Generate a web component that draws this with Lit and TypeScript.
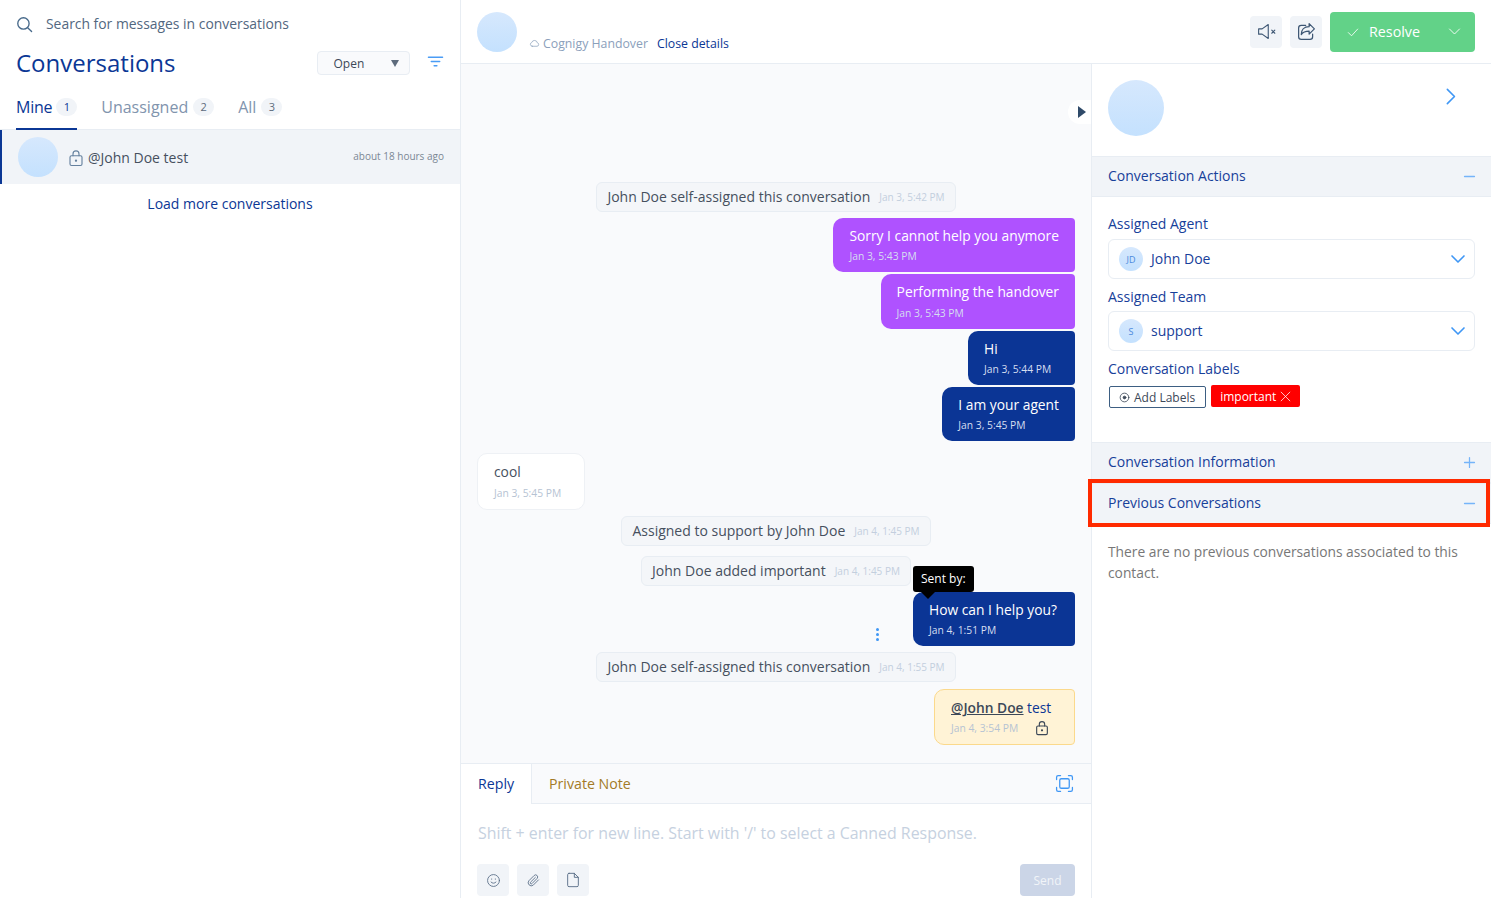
import { LitElement, html, css, svg } from 'lit';
import { customElement } from 'lit/decorators.js';

// small stroke icon helper, all icons on a 24 box
const icon = (body: unknown, size = 16, sw = 1.6) => html`<svg class="ico" width=${size} height=${size} viewBox="0 0 24 24" fill="none" stroke="currentColor" stroke-width=${sw} stroke-linecap="round" stroke-linejoin="round">${body}</svg>`;

const ICONS = {
  search: svg`<circle cx="10.5" cy="10.5" r="8"/><path d="M16.5 16.5 22 22"/>`,
  filter: svg`<path d="M2 6h20M6 12h12M10 18h4"/>`,
  lock: svg`<rect x="4" y="9" width="16" height="13" rx="2"/><path d="M8 9V6.5a4 4 0 0 1 8 0V9"/><circle cx="12" cy="15.5" r=".8" fill="currentColor"/>`,
  cloud: svg`<path d="M7 18h10.5a3.8 3.8 0 0 0 .7-7.500 6.300 6.300 0 0 0-12.200-.7A4.200 4.200 0 0 0 7 18Z"/>`,
  mute: svg`<path d="M3 9v6h4l7 5V4L7 9H3Z"/><path d="m18 10.5 3.5 3.5M21.5 10.5 18 14"/>`,
  share: svg`<path d="M11 5H6a3 3 0 0 0-3 3v10a3 3 0 0 0 3 3h10a3 3 0 0 0 3-3v-3"/><path d="m15 3 6 6-6 6v-3.5c-4 0-7 1-9 4 0-5 3-9 9-9V3Z"/>`,
  check: svg`<path d="m4 13 5.5 5.5L20 7"/>`,
  down: svg`<path d="m4 8 8 8 8-8"/>`,
  right: svg`<path d="m8 3 9 9-9 9"/>`,
  minus: svg`<path d="M5 12h14"/>`,
  plus: svg`<path d="M12 5v14M5 12h14"/>`,
  close: svg`<path d="m5 5 14 14M19 5 5 19"/>`,
  add: svg`<circle cx="12" cy="12" r="9.5"/><circle cx="12" cy="12" r="3" fill="currentColor"/>`,
  smile: svg`<circle cx="12" cy="12" r="9.5"/><path d="M8 14.5c2 2.5 6 2.5 8 0"/><path d="M9 9.500v.5M15 9.500v.5"/>`,
  clip: svg`<path d="m20 11-8.500 8.500a5 5 0 0 1-7-7L13 4a3.300 3.300 0 0 1 4.700 4.700L9.500 17a1.600 1.600 0 0 1-2.300-2.300L15 7"/>`,
  file: svg`<path d="M6 2h8l6 6v12a2 2 0 0 1-2 2H6a2 2 0 0 1-2-2V4a2 2 0 0 1 2-2Z"/><path d="M14 2v6h6"/>`,
  frame: svg`<rect x="6" y="6" width="12" height="12" rx="2"/><path d="M2 7V4a2 2 0 0 1 2-2h3M17 2h3a2 2 0 0 1 2 2v3M22 17v3a2 2 0 0 1-2 2h-3M7 22H4a2 2 0 0 1-2-2v-3"/>`,
};

type Item =
  | { kind: 'activity'; text: string; time: string; gap: number }
  | { kind: 'out'; text: string; time: string; gap: number; tone: 'bot' | 'agent'; tip?: boolean; tall?: boolean }
  | { kind: 'in'; text: string; time: string; gap: number }
  | { kind: 'note'; time: string; gap: number };

const THREAD: Item[] = [
  { kind: 'activity', text: 'John Doe self-assigned this conversation', time: 'Jan 3, 5:42 PM', gap: 0 },
  { kind: 'out', tone: 'bot', text: 'Sorry I cannot help you anymore', time: 'Jan 3, 5:43 PM', gap: 6 },
  { kind: 'out', tone: 'bot', text: 'Performing the handover', time: 'Jan 3, 5:43 PM', gap: 2, tall: true },
  { kind: 'out', tone: 'agent', text: 'Hi', time: 'Jan 3, 5:44 PM', gap: 2 },
  { kind: 'out', tone: 'agent', text: 'I am your agent', time: 'Jan 3, 5:45 PM', gap: 2 },
  { kind: 'in', text: 'cool', time: 'Jan 3, 5:45 PM', gap: 12 },
  { kind: 'activity', text: 'Assigned to support by John Doe', time: 'Jan 4, 1:45 PM', gap: 6 },
  { kind: 'activity', text: 'John Doe added important', time: 'Jan 4, 1:45 PM', gap: 10 },
  { kind: 'out', tone: 'agent', text: 'How can I help you?', time: 'Jan 4, 1:51 PM', gap: 6, tip: true },
  { kind: 'activity', text: 'John Doe self-assigned this conversation', time: 'Jan 4, 1:55 PM', gap: 6 },
  { kind: 'note', time: 'Jan 4, 3:54 PM', gap: 7 },
];

@customElement('app-root')
export class AppRoot extends LitElement {
  static styles = css`
    :host {
      display: flex;
      width: 100%;
      height: 100vh;
      overflow: hidden;
      position: relative;
      background: #fff;
      color: #3c4858;
      font-family: 'Open Sans', sans-serif;
      font-size: 14px;
    }
    .ico { display: block; flex: none; }
    .avatar {
      flex: none;
      border-radius: 50%;
      background: linear-gradient(#d6e8fd, #c4e1fe);
    }

    .list { width: 460px; flex: none; border-right: 1px solid #e8edf3; }
    .search { height: 47px; display: flex; align-items: center; gap: 13px; padding-left: 16px; box-sizing: border-box; color: #52677f; font-size: 13.9px; }
    .search .ico { color: #47698a; margin-top: 1px; }
    .title-row { height: 32px; display: flex; align-items: center; padding: 0 16.5px 0 16px; }
    h1 { margin: 0; flex: 1; font-size: 24px; font-weight: 500; color: #0b3795; line-height: 32px; }
    .status {
      width: 93px; height: 24px; box-sizing: border-box;
      display: flex; align-items: center; justify-content: space-between;
      padding: 0 10px 0 16px; margin-right: 17px;
      background: #f9fafc; border: 1px solid #e8edf3; border-radius: 4px;
      font-size: 12px; color: #3c4858;
    }
    .caret { width: 0; height: 0; border-left: 4px solid transparent; border-right: 4px solid transparent; border-top: 7px solid #5d6b7c; }
    .filter { color: #4a9cf5; margin-top: -3px; }
    .tabs { height: 51px; box-sizing: border-box; display: flex; gap: 24px; padding: 8px 0 0 16px; border-bottom: 1px solid #e8edf3; }
    .tab { display: flex; align-items: center; gap: 5px; height: 41px; padding-bottom: 2px; box-sizing: border-box; font-size: 16px; color: #8194ad; }
    .tab.on { gap: 4px; height: 43px; padding-bottom: 2px; letter-spacing: -0.25px; color: #0b3795; font-weight: 500; border-bottom: 2px solid #0b3795; }
    .count { min-width: 21px; height: 18px; line-height: 18px; border-radius: 9px; background: #f1f4f8; text-align: center; font-size: 11px; font-weight: 500; color: #5d6b7c; }
    .tab.on .count { color: #0b3795; }
    .row { height: 54px; box-sizing: border-box; display: flex; align-items: center; padding: 2px 16px 0; background: #f1f4f8; border-left: 2px solid #0b3795; }
    .row .avatar { width: 40px; height: 40px; margin: -2px 9px 0 0; }
    .row .ico { color: #64809e; margin-right: 3px; }
    .row .who { flex: 1; padding-bottom: 2px; font-size: 14px; color: #46505e; }
    .row .ago { font-size: 10px; color: #7b8794; margin-bottom: 5px; }
    .more { padding-top: 11px; text-align: center; font-size: 14px; font-weight: 500; color: #0b3795; line-height: 18px; }

    .main { flex: 1; min-width: 0; display: flex; flex-direction: column; }
    .top { height: 64px; box-sizing: border-box; flex: none; display: flex; align-items: center; padding: 0 16px; border-bottom: 1px solid #e8edf3; }
    .top .avatar { width: 40px; height: 40px; margin-right: 12px; }
    .channel { flex: 1; align-self: flex-end; padding-bottom: 11px; display: flex; align-items: center; gap: 3px; font-size: 12.3px; color: #8ba0bb; }
    .channel a { margin-left: 6px; color: #0b3795; font-weight: 500; }
    .square { width: 32px; height: 32px; margin-right: 8px; border-radius: 4px; background: #f1f4f8; display: grid; place-items: center; color: #3d5673; }
    .resolve { width: 145px; height: 40px; box-sizing: border-box; display: flex; align-items: center; padding: 0 13px 0 16px; border-radius: 4px; background: #62d288; color: #fff; font-size: 14.3px; font-weight: 500; }
    .resolve span { flex: 1; margin-left: 9px; }
    .body { flex: 1; min-height: 0; display: flex; }

    .chat { width: 630px; flex: none; display: flex; flex-direction: column; position: relative; }
    .thread { flex: 1; min-height: 0; box-sizing: border-box; display: flex; flex-direction: column; padding: 118px 16px 0; background: #f9fafc; }
    .toggle { position: absolute; right: 0; top: 36px; width: 23px; height: 24px; border-radius: 12px 0 0 12px; background: #fff; display: flex; align-items: center; justify-content: flex-end; padding-right: 5px; box-sizing: border-box; }
    .toggle i { width: 0; height: 0; border-top: 6px solid transparent; border-bottom: 6px solid transparent; border-left: 8px solid #2f4a69; }
    .activity { align-self: center; box-sizing: border-box; height: 30px; display: flex; align-items: center; gap: 9px; padding: 0 10px 2px; border: 1px solid #e8edf3; border-radius: 6px; background: #f4f6f9; font-size: 14px; color: #46505e; white-space: nowrap; }
    .activity small { margin-top: 2px; font-size: 10px; color: #c3cfde; }
    .bubble { position: relative; box-sizing: border-box; padding: 8px 16px 0; height: 54px; border-radius: 10px; font-size: 13.8px; line-height: 20px; white-space: nowrap; }
    .bubble small { display: block; min-width: 75px; margin-top: 3px; font-size: 10.3px; line-height: 14px; }
    .out { align-self: flex-end; color: #fff; border-radius: 10px 4px 4px 10px; }
    .out.bot { background: #af52ff; }
    .out.agent { background: #0b3595; }
    .out.tall { height: 55px; }
    .out.tall small { margin-top: 4px; }
    .out.tipped { width: 162px; }
    .out small { color: #d5def0; }
    .in { align-self: flex-start; height: 57px; width: 108px; background: #fff; border: 1px solid #eef1f5; color: #46505e; }
    .in small { color: #b6c3d3; margin-top: 4px; }
    .note { align-self: flex-end; width: 141px; height: 56px; padding-top: 8px; background: #fff3d6; border: 1px solid #fbd98c; border-radius: 10px 4px 4px 10px; color: #0b3795; }
    .note b { font-weight: 600; color: #3c4858; text-decoration: underline; }
    .note small { display: flex; align-items: center; justify-content: space-between; margin-top: 2px; padding-right: 8px; color: #b6c3d3; }
    .note .ico { color: #3c4858; }
    .tip { position: absolute; left: 0; top: -26px; height: 26px; padding: 0 8px; box-sizing: border-box; background: #000; color: #fff; font-size: 12px; line-height: 26px; border-radius: 3px; }
    .tip::after { content: ''; position: absolute; left: 8px; top: 26px; border: 7px solid transparent; border-top-color: #000; border-bottom: 0; }
    .dots { position: absolute; left: -37px; top: 36px; width: 3px; display: flex; flex-direction: column; gap: 2px; }
    .dots i { width: 3px; height: 3px; border-radius: 50%; background: #3f97f5; }
    .composer { flex: none; height: 134px; background: #fff; border-top: 1px solid #e8edf3; }
    .modes { height: 40px; box-sizing: border-box; display: flex; align-items: center; background: #f9fafc; border-bottom: 1px solid #e8edf3; padding-right: 17.5px; }
    .mode { height: 40px; box-sizing: border-box; padding: 0 17px; display: flex; align-items: center; font-size: 14.2px; color: #a37a27; }
    .mode.on { width: 71px; background: #fff; color: #0b3795; border-right: 1px solid #e8edf3; font-weight: 500; }
    .modes .frame { margin-left: auto; color: #3f97f5; }
    .hint { height: 60px; box-sizing: border-box; padding: 19px 17px 0; font-size: 15.9px; line-height: 20px; color: #c6d1e0; white-space: nowrap; }
    .tools { display: flex; align-items: center; gap: 8px; padding: 0 16px; }
    .tools .square { margin-right: 0; color: #5a6f88; }
    .send { margin-left: auto; width: 55px; height: 32px; border-radius: 4px; background: #cbd5e7; color: #f1f4f8; font-size: 12px; font-weight: 500; text-align: center; line-height: 33px; }

    .side { flex: 1; min-width: 0; border-left: 1px solid #e8edf3; }
    .profile { height: 92px; box-sizing: border-box; display: flex; justify-content: space-between; padding: 16px 31px 0 16px; color: #3f97f5; }
    .profile .avatar { width: 56px; height: 56px; }
    .profile .ico { margin-top: 7px; }
    .sec { height: 41px; box-sizing: border-box; display: flex; align-items: center; justify-content: space-between; padding: 0 13px 2px 16px; background: #f1f4f8; border-top: 1px solid #e8edf3; border-bottom: 1px solid #e8edf3; font-size: 14px; font-weight: 500; color: #17409a; }
    .sec .ico { color: #75b4f9; margin-top: 2px; }
    .fields { height: 245px; box-sizing: border-box; padding: 18px 16px 0; color: #17409a; font-size: 14px; font-weight: 500; }
    .fields label { display: block; line-height: 18px; }
    .fields label:first-child { margin-bottom: 6px; }
    .pick { height: 40px; box-sizing: border-box; margin: 5px 0 9px; padding: 0 7px 0 10px; display: flex; align-items: center; border: 1px solid #e8edf3; border-radius: 6px; }
    .pick .avatar { width: 24px; height: 24px; margin-right: 8px; display: grid; place-items: center; font-size: 9px; font-weight: 400; color: #4a89dc; }
    .pick span { flex: 1; padding-bottom: 1px; }
    .pick .ico { color: #3f97f5; }
    .chips { display: flex; align-items: flex-start; gap: 5px; margin-top: 8px; padding-left: 1px; }
    .chip { height: 22px; box-sizing: border-box; display: flex; align-items: center; gap: 4px; padding: 0 10px 0 9px; border-radius: 2px; font-size: 12px; font-weight: 400; white-space: nowrap; }
    .chip.add { border: 1px solid #3d5e82; color: #3c4858; }
    .chip.red { margin-top: -1px; padding-right: 7px; gap: 2px; background: #f00; color: #fff; font-weight: 500; }
    .empty { margin: 0; padding: 17px 16px; font-size: 13.8px; line-height: 21px; color: #777; }
    .mark { position: absolute; left: 1088px; top: 479px; width: 402px; height: 48px; box-sizing: border-box; border: 4px solid #ff2a00; }
  `;

  private renderItem(m: Item) {
    const gap = `margin-top:${m.gap}px`;
    if (m.kind === 'activity') {
      return html`<div class="activity" style=${gap}>${m.text}<small>${m.time}</small></div>`;
    }
    if (m.kind === 'note') {
      return html`<div class="bubble note" style=${gap}><b>@John Doe</b> test<small>${m.time}${icon(ICONS.lock, 16, 1.7)}</small></div>`;
    }
    if (m.kind === 'in') {
      return html`<div class="bubble in" style=${gap}>${m.text}<small>${m.time}</small></div>`;
    }
    return html`<div class="bubble out ${m.tone} ${m.tall ? 'tall' : ''} ${m.tip ? 'tipped' : ''}" style=${gap}>
      ${m.tip ? html`<div class="tip">Sent by:</div><div class="dots"><i></i><i></i><i></i></div>` : ''}
      ${m.text}<small>${m.time}</small>
    </div>`;
  }

  render() {
    return html`
      <section class="list">
        <div class="search">${icon(ICONS.search, 17, 1.9)}Search for messages in conversations</div>
        <div class="title-row">
          <h1>Conversations</h1>
          <div class="status">Open<i class="caret"></i></div>
          <div class="filter">${icon(ICONS.filter, 17, 1.9)}</div>
        </div>
        <div class="tabs">
          <div class="tab on">Mine <span class="count">1</span></div>
          <div class="tab">Unassigned <span class="count">2</span></div>
          <div class="tab">All <span class="count">3</span></div>
        </div>
        <div class="row">
          <div class="avatar"></div>
          ${icon(ICONS.lock, 18, 1.5)}
          <div class="who">@John Doe test</div>
          <div class="ago">about 18 hours ago</div>
        </div>
        <div class="more">Load more conversations</div>
      </section>

      <div class="main">
        <header class="top">
          <div class="avatar"></div>
          <div class="channel">${icon(ICONS.cloud, 11)}Cognigy Handover <a>Close details</a></div>
          <div class="square">${icon(ICONS.mute, 21, 1.25)}</div>
          <div class="square">${icon(ICONS.share, 21, 1.4)}</div>
          <div class="resolve">${icon(ICONS.check, 14, 1.4)}<span>Resolve</span>${icon(ICONS.down, 15, 1.4)}</div>
        </header>
        <div class="body">
          <section class="chat">
            <div class="thread">${THREAD.map((m) => this.renderItem(m))}</div>
            <div class="toggle"><i></i></div>
            <div class="composer">
              <div class="modes">
                <div class="mode on">Reply</div>
                <div class="mode">Private Note</div>
                <div class="frame">${icon(ICONS.frame, 19, 1.6)}</div>
              </div>
              <div class="hint">Shift + enter for new line. Start with '/' to select a Canned Response.</div>
              <div class="tools">
                <div class="square">${icon(ICONS.smile, 15, 1.4)}</div>
                <div class="square">${icon(ICONS.clip, 15, 1.4)}</div>
                <div class="square">${icon(ICONS.file, 16, 1.4)}</div>
                <div class="send">Send</div>
              </div>
            </div>
          </section>

          <aside class="side">
            <div class="profile"><div class="avatar"></div>${icon(ICONS.right, 19, 2)}</div>
            <div class="sec">Conversation Actions ${icon(ICONS.minus, 17, 1.8)}</div>
            <div class="fields">
              <label>Assigned Agent</label>
              <div class="pick"><div class="avatar">JD</div><span>John Doe</span>${icon(ICONS.down, 18, 2.2)}</div>
              <label>Assigned Team</label>
              <div class="pick"><div class="avatar">S</div><span>support</span>${icon(ICONS.down, 18, 2.2)}</div>
              <label>Conversation Labels</label>
              <div class="chips">
                <div class="chip add">${icon(ICONS.add, 11, 1.8)}Add Labels</div>
                <div class="chip red">important ${icon(ICONS.close, 15, 1.2)}</div>
              </div>
            </div>
            <div class="sec">Conversation Information ${icon(ICONS.plus, 17, 1.8)}</div>
            <div class="sec">Previous Conversations ${icon(ICONS.minus, 17, 1.8)}</div>
            <p class="empty">There are no previous conversations associated to this contact.</p>
          </aside>
        </div>
      </div>
      <div class="mark"></div>
    `;
  }
}
